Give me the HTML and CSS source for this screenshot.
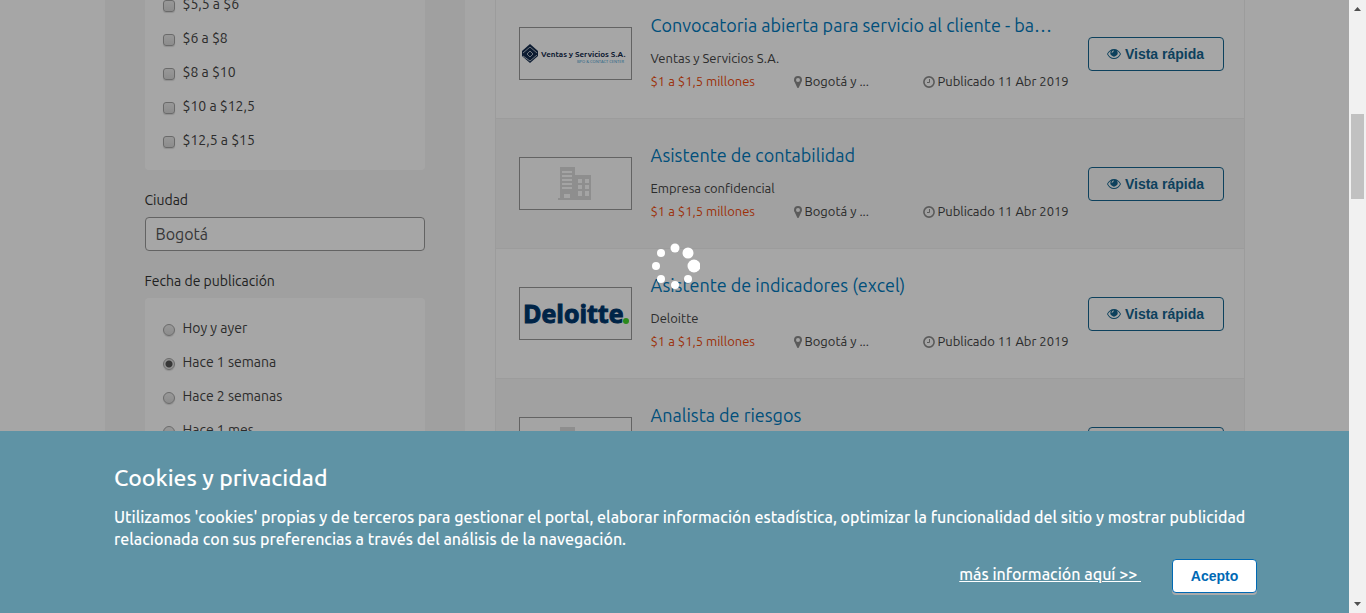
FILE: index.html
```html
<!DOCTYPE html>
<html lang="es">
<head>
<meta charset="utf-8">
<title>Ofertas de empleo en Bogotá</title>
<link rel="stylesheet" href="styles.css">
</head>
<body>
<svg class="sprite" aria-hidden="true">
  <symbol id="eye" viewBox="0 0 14 10"><path fill="currentColor" fill-rule="evenodd" d="M7 0C10 0 12.600 2 14 5C12.600 8 10 10 7 10S1.400 8 0 5C1.400 2 4 0 7 0ZM4 1.900C2.700 2.500 1.700 3.600 1 5C2.300 7.600 4.400 9 7 9S11.700 7.600 13 5C12.300 3.600 11.300 2.500 10 1.900A3.600 3.600 0 1 1 4 1.900ZM7 1.500A2.400 2.400 0 0 0 4.600 3.900H5.300A1.700 1.700 0 0 1 7 2.200Z"/></symbol>
  <symbol id="pin" viewBox="0 0 8 12"><path fill="currentColor" fill-rule="evenodd" d="M4 0A4 4 0 0 1 8 4C8 5 7.700 5.500 7.400 6.100L4.800 11.500Q4 12.500 3.200 11.500L.6 6.100C.3 5.500 0 5 0 4A4 4 0 0 1 4 0ZM4 2A2 2 0 1 0 4 6A2 2 0 0 0 4 2Z"/></symbol>
  <symbol id="clock" viewBox="0 0 12 12"><circle cx="6" cy="6" r="5.100" fill="none" stroke="currentColor" stroke-width="1.600"/><path d="M6.500 3V6.500H4" fill="none" stroke="currentColor"/></symbol>
  <symbol id="building" viewBox="0 0 33 33"><path fill="currentColor" fill-rule="evenodd" d="M2 0H17V8H33V33H0V31H2ZM4 4V6H14V4ZM4 8V10H14V8ZM4 12V14H14V12ZM4 16V18H14V16ZM4 20V22H14V20ZM6 27V31H12V27ZM20 12V16H24V12ZM27 12V16H31V12ZM20 18V22H24V18ZM27 18V22H31V18ZM20 24V29H24V24ZM27 24V29H31V24Z"/></symbol>
</svg>
<div class="window">
  <div class="view">
    <div class="page">
      <aside class="filters">
        <div class="panel panel-salary">
          <label class="option"><input type="checkbox"><span>$5,5 a $6</span></label>
          <label class="option"><input type="checkbox"><span>$6 a $8</span></label>
          <label class="option"><input type="checkbox"><span>$8 a $10</span></label>
          <label class="option"><input type="checkbox"><span>$10 a $12,5</span></label>
          <label class="option"><input type="checkbox"><span>$12,5 a $15</span></label>
        </div>
        <label class="filter-title" for="city">Ciudad</label>
        <input class="city" id="city" type="text" value="Bogotá">
        <h2 class="filter-title">Fecha de publicación</h2>
        <div class="panel panel-date">
          <label class="option"><input type="radio" name="date"><span>Hoy y ayer</span></label>
          <label class="option"><input type="radio" name="date" checked><span>Hace 1 semana</span></label>
          <label class="option"><input type="radio" name="date"><span>Hace 2 semanas</span></label>
          <label class="option"><input type="radio" name="date"><span>Hace 1 mes</span></label>
        </div>
      </aside>
      <main class="offers">
        <article class="offer">
          <svg class="logo" viewBox="0 0 111 51" role="img" aria-label="Ventas y Servicios S.A.">
            <path d="M10 16L18 23V28L10 35L2 28V23Z" fill="#142b4d"/>
            <path d="M3 25L10 19L17 25M3 28L10 33L17 27M7 26L10 23L13 26L10 29Z" fill="none" stroke="#aab4c0"/>
            <text class="logo-ventas" x="21" y="29">Ventas y Servicios S.A.</text>
            <text class="logo-bpo" x="57" y="35">BPO &amp; CONTACT CENTER</text>
          </svg>
          <div class="details">
            <h3 class="title"><a href="#">Convocatoria abierta para servicio al cliente - ba…</a></h3>
            <p class="company">Ventas y Servicios S.A.</p>
            <div class="meta"><span class="salary">$1 a $1,5 millones</span><span class="fact"><svg class="pin"><use href="#pin"/></svg>Bogotá y ...</span><span class="fact"><svg class="clock"><use href="#clock"/></svg>Publicado 11 Abr 2019</span></div>
          </div>
          <button class="quick" type="button"><svg class="eye"><use href="#eye"/></svg>Vista rápida</button>
        </article>
        <article class="offer shaded">
          <svg class="logo" viewBox="0 0 111 51" role="img" aria-label="Empresa"><use class="building" href="#building" x="38" y="9" width="33" height="33"/></svg>
          <div class="details">
            <h3 class="title"><a href="#">Asistente de contabilidad</a></h3>
            <p class="company">Empresa confidencial</p>
            <div class="meta"><span class="salary">$1 a $1,5 millones</span><span class="fact"><svg class="pin"><use href="#pin"/></svg>Bogotá y ...</span><span class="fact"><svg class="clock"><use href="#clock"/></svg>Publicado 11 Abr 2019</span></div>
          </div>
          <button class="quick" type="button"><svg class="eye"><use href="#eye"/></svg>Vista rápida</button>
        </article>
        <article class="offer">
          <svg class="logo" viewBox="0 0 111 51" role="img" aria-label="Deloitte">
            <text class="logo-deloitte" x="3" y="35">Deloitte</text>
            <circle cx="106" cy="33" r="3" fill="#43d52c"/>
          </svg>
          <div class="details">
            <h3 class="title"><a href="#">Asistente de indicadores (excel)</a></h3>
            <p class="company">Deloitte</p>
            <div class="meta"><span class="salary">$1 a $1,5 millones</span><span class="fact"><svg class="pin"><use href="#pin"/></svg>Bogotá y ...</span><span class="fact"><svg class="clock"><use href="#clock"/></svg>Publicado 11 Abr 2019</span></div>
          </div>
          <button class="quick" type="button"><svg class="eye"><use href="#eye"/></svg>Vista rápida</button>
        </article>
        <article class="offer shaded">
          <svg class="logo" viewBox="0 0 111 51" role="img" aria-label="Empresa"><use class="building" href="#building" x="38" y="9" width="33" height="33"/></svg>
          <div class="details">
            <h3 class="title"><a href="#">Analista de riesgos</a></h3>
          </div>
          <button class="quick" type="button"><svg class="eye"><use href="#eye"/></svg>Vista rápida</button>
        </article>
      </main>
    </div>
    <div class="loading">
      <svg class="spinner" viewBox="0 0 50 50" fill="#fff" role="img" aria-label="Cargando">
        <circle cx="25" cy="7" r="4.500"/><circle cx="38" cy="12" r="5.500"/><circle cx="44" cy="25" r="6.500"/><circle cx="38" cy="38" r="4"/><circle cx="25" cy="44" r="4"/><circle cx="11" cy="38" r="4"/><circle cx="6" cy="25" r="4"/><circle cx="11" cy="12" r="4"/>
      </svg>
    </div>
    <section class="cookies">
      <h2 class="cookies-title">Cookies y privacidad</h2>
      <p class="cookies-text">Utilizamos 'cookies' propias y de terceros para gestionar el portal, elaborar información estadística, optimizar la funcionalidad del sitio y mostrar publicidad relacionada con sus preferencias a través del análisis de la navegación.</p>
      <div class="cookies-actions">
        <a class="more" href="#">más información aquí &gt;&gt;&nbsp;</a>
        <button class="accept" type="button">Acepto</button>
      </div>
    </section>
  </div>
  <div class="scrollbar" aria-hidden="true">
    <svg class="arrow" viewBox="0 0 17 17"><path d="M5 11L8.500 7L12 11Z" fill="#505050"/></svg>
    <div class="track"><div class="thumb"></div></div>
    <svg class="arrow" viewBox="0 0 17 17"><path d="M5 6L8.500 10L12 6Z" fill="#505050"/></svg>
  </div>
</div>
</body>
</html>
```
FILE: styles.css
```css
* { box-sizing: border-box; }
body { margin: 0; font-family: Ubuntu, "Noto Sans", sans-serif; font-size: 13px; color: #444; background: #fff; }
h2, h3, p { margin: 0; font-weight: 400; }
.sprite { display: none; }
.window { display: flex; height: 100vh; overflow: hidden; }
.view { position: relative; flex: 1; min-width: 0; overflow: hidden; }
.page { display: flex; gap: 30px; max-width: 1140px; margin: -12px auto 0; }

.filters { flex: none; width: 360px; padding: 0 40px; background: #f6f6f6; }
.panel { background: #fff; border-radius: 4px; padding: 0 18px 12px; }
.panel-date { padding-top: 14px; }
.option { display: flex; align-items: center; gap: 8px; height: 34px; font-size: 14px; }
.option span { padding-bottom: 3px; }
.option input { appearance: none; width: 12px; height: 12px; margin: 2px 0 0; border: 1px solid #a4a4a4; border-radius: 3px; background: linear-gradient(#eaeaea, #d8d8d8); box-shadow: 0 1px 1px #ddd; }
.option input[type="radio"] { border-radius: 50%; }
.option input[type="radio"]:checked { background: radial-gradient(circle, #555 3px, #e2e2e2 4px); }
.filter-title { display: block; font-size: 14px; line-height: 20px; color: #333; margin: 20px 0 7px; }
.city { display: block; width: 100%; height: 34px; padding: 0 10px; border: 1px solid #999; border-radius: 4px; background: #fff; font: inherit; font-size: 16px; color: #555; }

.offers { flex: 1; min-width: 0; border: solid #f0f0f0; border-width: 0 1px; }
.offer { display: flex; align-items: center; height: 130px; padding: 0 20px 0 23px; border-top: 1px solid #f0f0f0; }
.shaded { background: #f8f8f8; }
.logo { flex: none; width: 113px; height: 53px; margin-right: 19px; border: 1px solid #999; background: #fff; }
.shaded .logo { background: #fcfcfc; }
.building { color: #dadada; }
.logo-ventas { font: 700 8px Ubuntu, "Noto Sans", sans-serif; fill: #142b4d; }
.logo-bpo { font: 4px "Open Sans", sans-serif; fill: #3a9bd0; }
.logo-deloitte { font: 700 25px "Open Sans", sans-serif; fill: #00386e; stroke: #00386e; }
.details { flex: 1; min-width: 0; min-height: 83px; }
.title { font-size: 18px; line-height: 26px; margin-bottom: 9px; white-space: nowrap; }
.title a { color: #007abd; text-decoration: none; }
.company { line-height: 23px; }
.meta { display: grid; grid-template-columns: 143px 129px 1fr; line-height: 23px; white-space: nowrap; }
.salary { color: #f04a0c; }
.fact { display: flex; align-items: center; gap: 3px; }
.pin { width: 8px; height: 12px; color: #8c8c8c; }
.clock { width: 12px; height: 12px; color: #8c8c8c; }
.quick { display: flex; flex: none; align-items: center; justify-content: center; gap: 4px; width: 136px; height: 34px; padding: 0; border: 1px solid #14658f; border-radius: 4px; background: transparent; color: #14658f; font: 700 14px "Liberation Sans", Arial, sans-serif; }
.eye { width: 14px; height: 10px; }

.loading { position: absolute; inset: 0; display: flex; align-items: center; justify-content: center; padding-bottom: 82px; background: rgba(0, 0, 0, .35); }
.spinner { width: 50px; height: 50px; }

.cookies { position: absolute; left: 0; right: 0; bottom: 0; padding: 32px 92px 20px 114px; background: #5f93a5; color: #fff; }
.cookies-title { font-size: 23px; font-weight: 500; line-height: 30px; margin-bottom: 13px; }
.cookies-text { font-size: 16px; font-weight: 500; line-height: 22px; margin-bottom: 9px; }
.cookies-actions { display: flex; align-items: center; justify-content: flex-end; gap: 31px; }
.more { padding-bottom: 4px; color: #fff; font-size: 16px; font-weight: 500; }
.accept { width: 85px; height: 34px; padding: 0; border: 1px solid #0069b4; border-radius: 4px; background: #fff; box-shadow: 0 2px #aaa; color: #0069b4; font: 700 14px "Liberation Sans", Arial, sans-serif; }

.scrollbar { display: flex; flex: none; flex-direction: column; width: 17px; background: #f1f1f1; }
.arrow { width: 17px; height: 17px; }
.track { flex: 1; padding: 97px 2px 0; }
.thumb { height: 85px; background: #c1c1c1; }
```
